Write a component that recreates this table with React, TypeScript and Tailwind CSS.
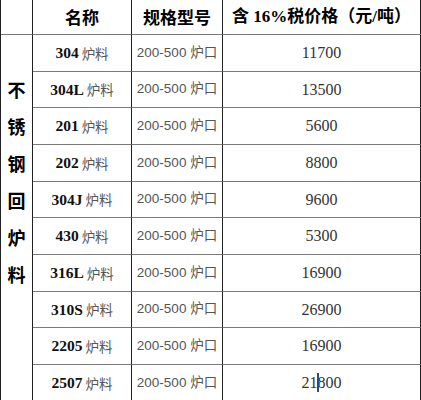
const rows = [
  { code: "304", price: "11700" },
  { code: "304L", price: "13500" },
  { code: "201", price: "5600" },
  { code: "202", price: "8800" },
  { code: "304J", price: "9600" },
  { code: "430", price: "5300" },
  { code: "316L", price: "16900" },
  { code: "310S", price: "26900" },
  { code: "2205", price: "16900" },
  { code: "2507", price: "21800" },
];

const serif = "font-['Liberation_Serif','Noto_Sans_CJK_SC',serif]";
const cjk = "font-['Noto_Sans_CJK_SC',sans-serif]";

export default function App() {
  return (
    <div className="w-[421px] h-[400px] overflow-hidden bg-white">
      <div className="grid grid-cols-[32px_99px_91px_198px] grid-rows-[35px_37px_36px_37px_37px_36px_37px_37px_36px_37px_37px] border-l border-[#222]">
        {/* header */}
        <div className="border-r border-b border-r-[#222] border-b-[#7a7a7a]" />
        <div className={`flex items-center justify-center border-r border-b border-r-[#222] border-b-[#7a7a7a] text-[17px] font-bold text-black ${cjk}`}>
          名称
        </div>
        <div className={`flex items-center justify-center border-r border-b border-r-[#222] border-b-[#7a7a7a] text-[17px] font-bold text-black ${cjk}`}>
          规格型号
        </div>
        <div className={`flex items-center justify-center border-r border-b border-r-[#222] border-b-[#7a7a7a] text-[17px] font-bold text-black ${serif}`}>
          含 16%税价格（元/吨）
        </div>

        {/* left vertical label */}
        <div className={`row-start-2 row-span-10 col-start-1 flex flex-col items-center pt-[36px] border-r border-[#222] text-[18px] leading-[37px] font-bold text-black ${cjk}`}>
          {"不锈钢回炉料".split("").map((c) => (
            <span key={c}>{c}</span>
          ))}
        </div>

        {rows.map((r, i) => (
          <Row key={i} code={r.code} price={r.price} last={i === rows.length - 1} />
        ))}
      </div>
    </div>
  );
}

function Row({ code, price, last }: { code: string; price: string; last: boolean }) {
  const cell = "flex items-center justify-center border-r border-b border-r-[#222] border-b-[#7a7a7a]";
  return (
    <>
      <div className={`${cell} col-start-2`}>
        <span className={`text-[15.5px] font-bold text-[#111] ${serif}`}>{code}</span>
        <span className={`ml-[3px] text-[13.5px] text-[#555] ${cjk}`}>炉料</span>
      </div>
      <div className={`${cell} text-[13.5px] text-[#555] font-['Liberation_Sans','Noto_Sans_CJK_SC',sans-serif]`}>
        200-500 炉口
      </div>
      <div className={`${cell} text-[16px] text-[#333] ${serif}`}>
        {last ? (
          <span>
            21
            <span className="relative inline-block w-0">
              <span className="absolute left-[-1px] top-[-15px] w-[2px] h-[19px] bg-[#2a4a80]" />
            </span>
            800
          </span>
        ) : (
          price
        )}
      </div>
    </>
  );
}
